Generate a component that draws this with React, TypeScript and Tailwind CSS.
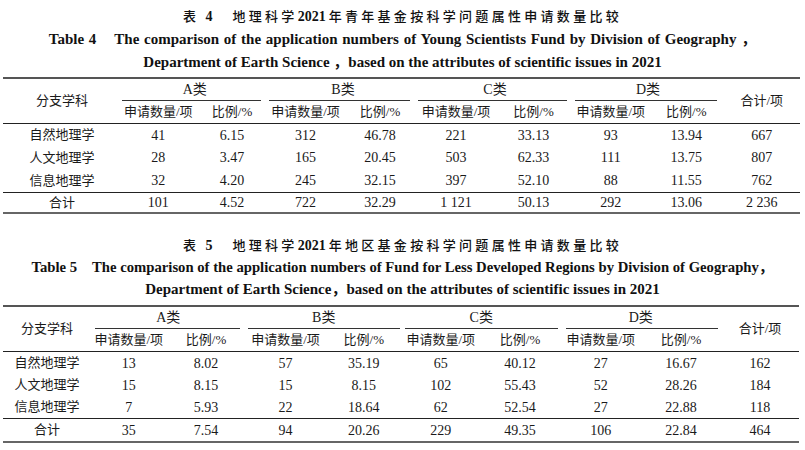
import React from 'react';

const serif = "font-['Liberation_Serif','Noto_Sans_CJK_SC',serif]";

type Row = [string, string, string, string, string, string, string, string, string, string];

interface TableSpec {
  cn: string;
  cnMid: string;
  en1: string;
  en2: string;
  en1Class: string;
  en1Gap: string;
  cols: string;
  ruleMargins: string[];
  rows: Row[];
  total: Row;
  rowHeights: string[];
  totalHeight: string;
  titleTop: string;
  line1H: string;
  line2H: string;
  titleGap: string;
}

const table4: TableSpec = {
  cn: '4',
  cnMid: '年青年基金按科学问题属性申请数量比较',
  en1: 'The comparison of the application numbers of Young Scientists Fund by Division of Geography ，',
  en2: 'Department of Earth Science ，based on the attributes of scientific issues in 2021',
  en1Class: 'text-[15px] [word-spacing:1px]',
  en1Gap: 'w-[18px]',
  cols: 'grid-cols-[118px_74.5px_73px_74px_75px_77px_78px_76.5px_74.5px_76.5px]',
  ruleMargins: ['ml-[1px] mr-[7.5px]', 'ml-0 mr-[7.5px]', 'ml-[0.5px] mr-[5.5px]', 'ml-[2.5px] mr-[6.5px]'],
  rows: [
    ['自然地理学', '41', '6.15', '312', '46.78', '221', '33.13', '93', '13.94', '667'],
    ['人文地理学', '28', '3.47', '165', '20.45', '503', '62.33', '111', '13.75', '807'],
    ['信息地理学', '32', '4.20', '245', '32.15', '397', '52.10', '88', '11.55', '762'],
  ],
  total: ['合计', '101', '4.52', '722', '32.29', '1 121', '50.13', '292', '13.06', '2 236'],
  rowHeights: ['h-[22px]', 'h-[23px]', 'h-[23px]'],
  totalHeight: 'h-[19px]',
  titleTop: 'pt-[5px]',
  line1H: 'h-[24px] leading-[24px]',
  line2H: 'h-[22px] leading-[22px]',
  titleGap: 'mb-[4px]',
};

const table5: TableSpec = {
  cn: '5',
  cnMid: '年地区基金按科学问题属性申请数量比较',
  en1: 'The comparison of the application numbers of Fund for Less Developed Regions by Division of Geography，',
  en2: 'Department of Earth Science，based on the attributes of scientific issues in 2021',
  en1Class: 'text-[14.7px]',
  en1Gap: 'w-[15px]',
  cols: 'grid-cols-[88px_75.5px_79px_80px_76.5px_77.5px_81px_80.5px_80px_78px]',
  ruleMargins: ['ml-[4px] mr-[5.5px]', 'ml-[2.5px] mr-[2px]', 'ml-[3px] mr-[2.5px]', 'ml-[5.5px] mr-[3px]'],
  rows: [
    ['自然地理学', '13', '8.02', '57', '35.19', '65', '40.12', '27', '16.67', '162'],
    ['人文地理学', '15', '8.15', '15', '8.15', '102', '55.43', '52', '28.26', '184'],
    ['信息地理学', '7', '5.93', '22', '18.64', '62', '52.54', '27', '22.88', '118'],
  ],
  total: ['合计', '35', '7.54', '94', '20.26', '229', '49.35', '106', '22.84', '464'],
  rowHeights: ['h-[22px]', 'h-[22px]', 'h-[22px]'],
  totalHeight: 'h-[22px]',
  titleTop: 'pt-[20px]',
  line1H: 'h-[23px] leading-[23px]',
  line2H: 'h-[20px] leading-[20px]',
  titleGap: 'mb-[6px]',
};

function Title({ t }: { t: TableSpec }) {
  return (
    <div className={`${t.titleTop} ${t.titleGap} text-center text-[#111]`}>
      <div className="h-[22px] leading-[22px] text-[13px]">
        <span className="font-['Noto_Sans_CJK_SC',sans-serif] font-medium tracking-[3.3px]">表 </span>
        <span className={`${serif} font-bold text-[14px]`}>{t.cn}</span>
        <span className="inline-block w-[20px]" />
        <span className="font-['Noto_Sans_CJK_SC',sans-serif] font-medium tracking-[3.3px]">地理科学</span>
        <span className={`${serif} font-bold text-[14px]`}>2021</span>
        <span className="inline-block w-[3px]" />
        <span className="font-['Noto_Sans_CJK_SC',sans-serif] font-medium tracking-[3.3px]">{t.cnMid}</span>
      </div>
      <div className={`${serif} ${t.line1H} ${t.en1Class} font-bold`}>
        Table {t.cn}
        <span className={`inline-block ${t.en1Gap}`} />
        {t.en1}
      </div>
      <div className={`${serif} ${t.line2H} font-bold text-[15px]`}>{t.en2}</div>
    </div>
  );
}

function DataTable({ t }: { t: TableSpec }) {
  const groups = ['A类', 'B类', 'C类', 'D类'];
  return (
    <div className={`grid ${t.cols} ${serif} text-[13px] text-[#1a1a1a]`}>
      <div className="col-span-full h-[2px] bg-[#555]" />

      <div className="row-span-2 flex items-center justify-center">分支学科</div>
      {groups.map((g, i) => (
        <div key={g} className="col-span-2 h-[22px] flex flex-col">
          <div className="flex-1 flex items-center justify-center text-[14px]">{g}</div>
          <div className={`h-px bg-[#333] ${t.ruleMargins[i]}`} />
        </div>
      ))}
      <div className="row-span-2 flex items-center justify-center">合计/项</div>
      {groups.map((g) => (
        <React.Fragment key={g + 'sub'}>
          <div className="h-[22px] flex items-center justify-center">申请数量/项</div>
          <div className="h-[22px] flex items-center justify-center">比例/%</div>
        </React.Fragment>
      ))}

      <div className="col-span-full h-px bg-[#222]" />

      {t.rows.map((row, r) =>
        row.map((cell, c) => (
          <div
            key={r + '-' + c}
            className={`${t.rowHeights[r]} flex items-center justify-center ${c > 0 ? 'text-[14px]' : ''}`}
          >
            {cell}
          </div>
        ))
      )}

      <div className="col-span-full h-px bg-[#222]" />

      {t.total.map((cell, c) => (
        <div
          key={'t' + c}
          className={`${t.totalHeight} flex items-center justify-center ${c > 0 ? 'text-[14px]' : ''}`}
        >
          {cell}
        </div>
      ))}

      <div className="col-span-full h-[2px] bg-[#666]" />
    </div>
  );
}

export default function App() {
  return (
    <div className="w-[805px] h-[450px] bg-white overflow-hidden">
      <Title t={table4} />
      <div className="pl-[3px]">
        <DataTable t={table4} />
      </div>
      <Title t={table5} />
      <div className="pl-[3px]">
        <DataTable t={table5} />
      </div>
    </div>
  );
}
